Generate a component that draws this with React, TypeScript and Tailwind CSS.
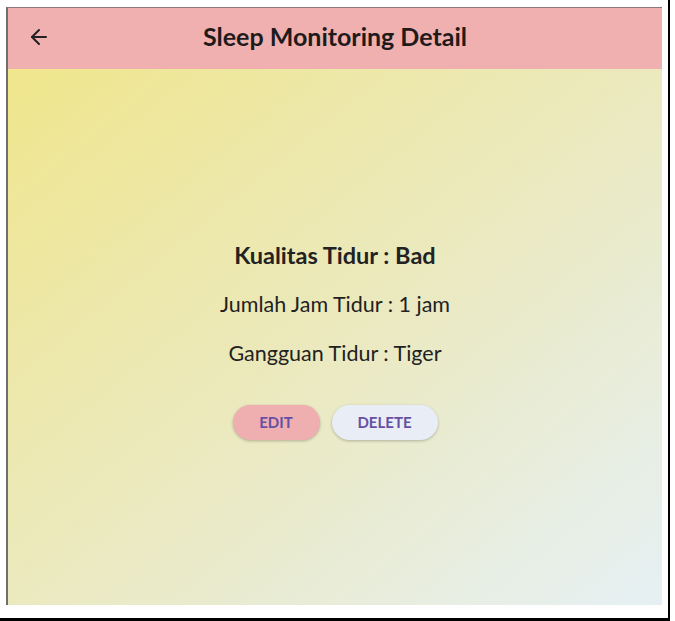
import { ArrowLeft } from "lucide-react";

const details = [
  { label: "Jumlah Jam Tidur", value: "1 jam" },
  { label: "Gangguan Tidur", value: "Tiger" },
];

export default function App() {
  return (
    <div className="h-[621px] w-[675px] bg-white font-['Lato',sans-serif]">
      <div className="h-[621px] w-[670px] border-r-2 border-b-[3px] border-black pt-[7px] pl-[6px]">
        <div className="flex h-[598px] w-[656px] flex-col border-t border-l-2 border-t-[#8a7878] border-l-[#6e6e6e]">
          {/* App bar */}
          <header className="relative flex h-[61px] shrink-0 items-center justify-center bg-[#f0b0b0] pb-[5px]">
            <button className="absolute top-[17px] left-[19px] text-[#222]">
              <ArrowLeft size={24} strokeWidth={2} />
            </button>
            <h1 className="text-[25px] leading-[30px] font-bold text-[#1f1b1b]">Sleep Monitoring Detail</h1>
          </header>

          {/* Body */}
          <main className="flex flex-1 flex-col items-center justify-center bg-gradient-to-br from-[#f0e68c] via-[#ebe9be] to-[#e6f0f4] pt-[7px] text-[#222]">
            <p className="text-[23.5px] leading-[28px] font-bold">Kualitas Tidur : Bad</p>
            {details.map((d) => (
              <p key={d.label} className="mt-[21px] text-[21.5px] leading-[28px]">
                {d.label} : {d.value}
              </p>
            ))}

            <div className="mt-[38px] flex gap-3">
              <button className="h-[35px] w-[87px] rounded-full bg-[#efaeb0] text-[15px] font-bold text-[#6650a4] shadow-[0_1px_3px_rgba(0,0,0,0.25)]">
                EDIT
              </button>
              <button className="h-[35px] w-[106px] rounded-full bg-[#e9eef6] text-[15px] font-bold text-[#6650a4] shadow-[0_1px_3px_rgba(0,0,0,0.25)]">
                DELETE
              </button>
            </div>
          </main>
        </div>
      </div>
    </div>
  );
}
